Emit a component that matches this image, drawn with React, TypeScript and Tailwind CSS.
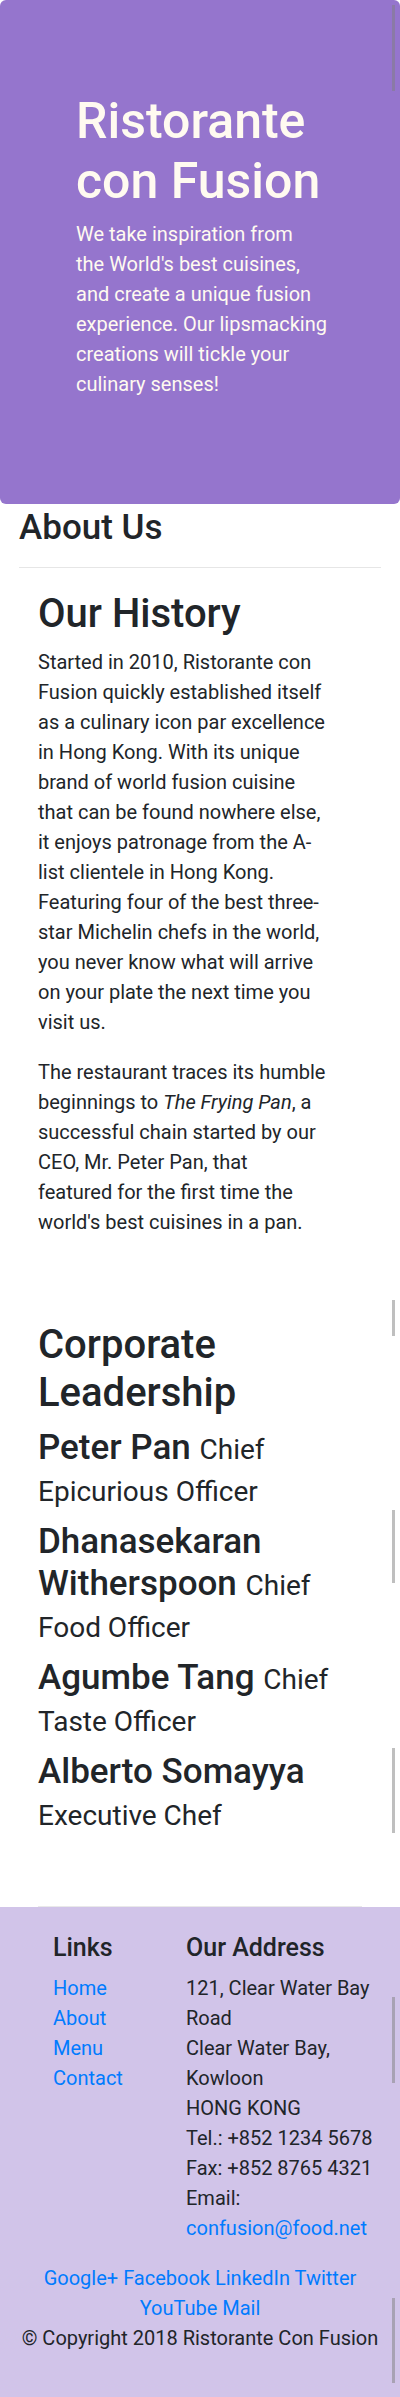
const LEADERS = [
  { name: "Peter Pan", title: "Chief Epicurious Officer" },
  { name: "Dhanasekaran Witherspoon", title: "Chief Food Officer" },
  { name: "Agumbe Tang", title: "Chief Taste Officer" },
  { name: "Alberto Somayya", title: "Executive Chef" },
];

const LINKS = ["Home", "About", "Menu", "Contact"];
const SOCIAL = ["Google+", "Facebook", "LinkedIn", "Twitter", "YouTube", "Mail"];

// overlay scrollbar thumbs that show up in the captured page
const THUMBS = [
  { top: "top-[5px]", h: "h-[86px]" },
  { top: "top-[1300px]", h: "h-[36px]" },
  { top: "top-[1510px]", h: "h-[73px]" },
  { top: "top-[1748px]", h: "h-[85px]" },
  { top: "top-[1997px]", h: "h-[86px]" },
  { top: "top-[2298px]", h: "h-[85px]" },
];

function Jumbotron() {
  return (
    <div className="rounded-[6px] bg-[#9575cd] pt-[91px] pr-[68px] pb-[105px] pl-[76px] text-[#fffaf0]">
      <h1 className="mb-[8px] text-[50px] font-medium leading-[60px]">
        Ristorante
        <br />
        con Fusion
      </h1>
      <p className="text-[20px] leading-[30px]">
        We take inspiration from
        <br />
        the World's best cuisines,
        <br />
        and create a unique fusion
        <br />
        experience. Our lipsmacking
        <br />
        creations will tickle your
        <br />
        culinary senses!
      </p>
    </div>
  );
}

function Footer() {
  return (
    <footer className="bg-[#d1c4e9] pt-[26px] pb-[44px] text-[#212529]">
      <div className="flex">
        <div className="w-[186px] shrink-0 pl-[53px]">
          <h5 className="mb-[10px] text-[25px] font-medium leading-[30px]">Links</h5>
          <ul className="text-[20px] leading-[30px]">
            {LINKS.map((l) => (
              <li key={l}>
                <a href="#" className="text-[#007bff]">
                  {l}
                </a>
              </li>
            ))}
          </ul>
        </div>
        <div className="flex-1 pr-[19px]">
          <h5 className="mb-[10px] text-[25px] font-medium leading-[30px]">Our Address</h5>
          <address className="mb-[20px] text-[20px] not-italic leading-[30px]">
            121, Clear Water Bay Road
            <br />
            Clear Water Bay, Kowloon
            <br />
            HONG KONG
            <br />
            Tel.: +852 1234 5678
            <br />
            Fax: +852 8765 4321
            <br />
            Email:{" "}
            <a href="mailto:confusion@food.net" className="text-[#007bff]">
              confusion@food.net
            </a>
          </address>
        </div>
      </div>
      <div className="px-[19px] text-center text-[20px] leading-[30px]">
        <div>
          {SOCIAL.map((s, i) => (
            <span key={s}>
              <a href="#" className="text-[#007bff]">
                {s}
              </a>
              {i < SOCIAL.length - 1 ? " " : ""}
            </span>
          ))}
        </div>
        <p>© Copyright 2018 Ristorante Con Fusion</p>
      </div>
    </footer>
  );
}

export default function App() {
  return (
    <div className="relative min-h-[2397px] bg-white font-[Roboto,sans-serif] text-[#212529]">
      <Jumbotron />

      <div className="mt-[3px] px-[19px]">
        <h3 className="mb-[18px] text-[35px] font-medium leading-[1.2]">About Us</h3>
        <hr className="h-px border-0 bg-[#e6e6e6]" />

        <div className="mt-[22px] px-[19px]">
          <div className="w-[293px]">
            <h2 className="mb-[9px] text-[40px] font-medium leading-[1.2]">Our History</h2>
            <p className="mb-[20px] text-[20px] leading-[30px]">
              Started in 2010, Ristorante con Fusion quickly established itself as a culinary icon par
              excellence in Hong Kong. With its unique brand of world fusion cuisine that can be found
              nowhere else, it enjoys patronage from the A-list clientele in Hong Kong. Featuring four of
              the best three-star Michelin chefs in the world, you never know what will arrive on your
              plate the next time you visit us.
            </p>
            <p className="w-[289px] text-[20px] leading-[30px]">
              The restaurant traces its humble beginnings to <em>The Frying Pan</em>, a successful chain
              started by our CEO, Mr. Peter Pan, that
              <br />
              featured for the first time the world's best cuisines in a pan.
            </p>
          </div>

          <div className="mt-[84px]">
            <h2 className="mb-[10px] text-[40px] font-medium leading-[1.2]">Corporate Leadership</h2>
            {LEADERS.map((l) => (
              <h3 key={l.name} className="mb-[10px] text-[35px] font-medium leading-[1.2]">
                {l.name} <small className="text-[28px] font-normal">{l.title}</small>
              </h3>
            ))}
          </div>
        </div>
      </div>

      <div className="mx-[38px] mt-[71px] h-px bg-[#e9e9e9]" />
      <Footer />

      {THUMBS.map((t) => (
        <div key={t.top} className={`absolute right-[5px] w-[3px] bg-[#808080]/50 ${t.top} ${t.h}`} />
      ))}
    </div>
  );
}
